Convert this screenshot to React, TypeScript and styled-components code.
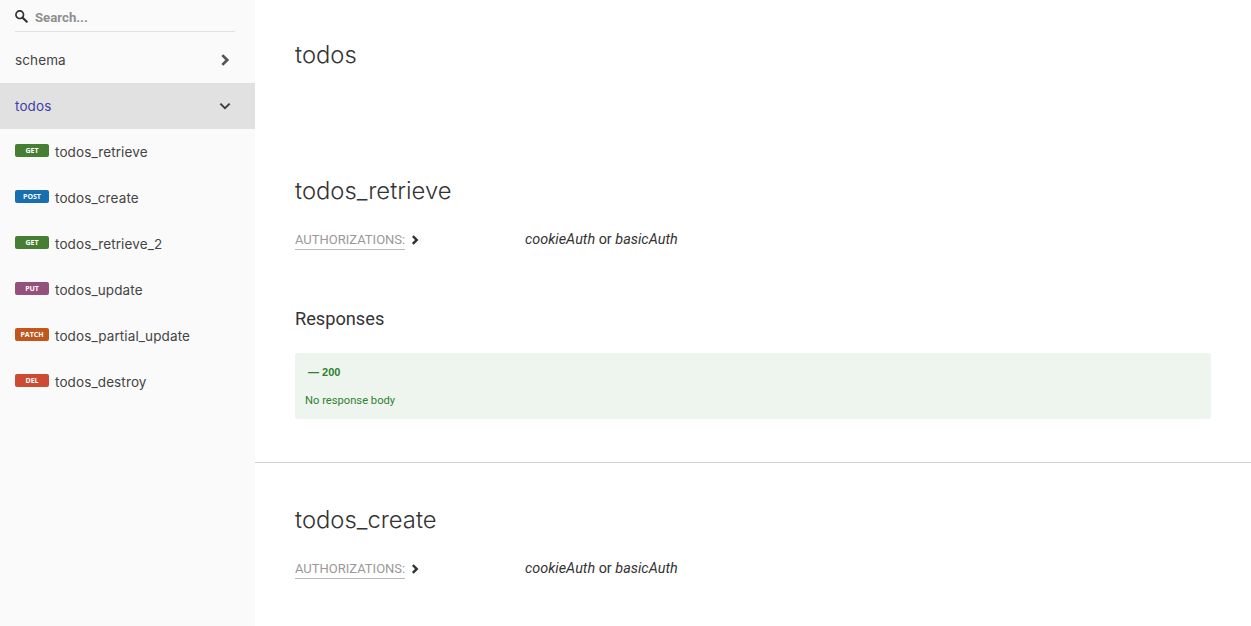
import React from "react";
import styled, { createGlobalStyle } from "styled-components";

const Global = createGlobalStyle`
  html, body { margin: 0; padding: 0; height: 100%; overflow: hidden; background: #fff; }
  body { font-family: "Roboto", sans-serif; color: #333; }
  #root { height: 100%; }
`;

const Page = styled.div`
  display: flex;
  height: 626px;
  overflow: hidden;
`;

const Sidebar = styled.aside`
  width: 255px;
  flex: none;
  background: #fafafa;
`;

const SearchBox = styled.div`
  display: flex;
  align-items: center;
  gap: 7px;
  height: 31px;
  margin: 0 20px 5px 15px;
  border-bottom: 1px solid #e1e1e1;
  box-sizing: content-box;
`;

const SearchIconWrap = styled.svg`
  flex: none;
  position: relative;
  top: 1px;
  fill: #333;
`;

const SearchLabel = styled.span`
  font: 700 13.2px "Roboto", sans-serif;
  color: #8f8f8f;
  position: relative;
  top: 2px;
`;

const MenuRow = styled.div<{ $active?: boolean }>`
  display: flex;
  align-items: center;
  height: 46px;
  padding: 0 21px 0 15px;
  background: ${(p) => (p.$active ? "#e1e1e1" : "transparent")};
`;

const MenuLabel = styled.span<{ $active?: boolean }>`
  flex: 1;
  font: 400 13.5px "Inter", sans-serif;
  letter-spacing: 0.12px;
  color: ${(p) => (p.$active ? "#3e3ea8" : "#444")};
`;

const Badge = styled.span<{ $color: string }>`
  display: flex;
  align-items: center;
  justify-content: center;
  width: 34px;
  height: 13px;
  margin: -4px 6px 0 0;
  border-radius: 2px;
  background: ${(p) => p.$color};
  color: #fff;
  font: 700 7px "Open Sans", sans-serif;
`;

const Main = styled.main`
  flex: 1;
  min-width: 0;
`;

const TagSection = styled.section`
  padding: 40px 40px 0;
  height: 94px;
`;

const PageTitle = styled.h1`
  margin: 0;
  font: 300 23.8px/30px "Inter", sans-serif;
  color: #333;
`;

const Operation = styled.section<{ $divided?: boolean }>`
  padding: 42px 40px 43px;
  border-bottom: ${(p) => (p.$divided ? "1px solid #d0d0d0" : "none")};
`;

const OpTitle = styled.h2`
  margin: 0 0 23px;
  font: 300 23.8px/30px "Inter", sans-serif;
  color: #333;
`;

const AuthRow = styled.div`
  display: flex;
  align-items: flex-start;
`;

const AuthToggle = styled.div`
  display: flex;
  align-items: center;
  width: 230px;
  flex: none;
`;

const AuthLabel = styled.span`
  font: 400 13px/18px "Roboto", sans-serif;
  padding-top: 2px;
  color: #999;
  border-bottom: 1px solid #bbb;
  width: 110px;
  margin-right: 3px;
  white-space: nowrap;
`;

const AuthSchemes = styled.div`
  font: 400 14.4px/21px "Roboto", sans-serif;
  color: #333;
  em { font-style: italic; }
`;

const ResponsesTitle = styled.h3`
  margin: 57px 0 22px;
  font: 400 18.2px/24px "Roboto", sans-serif;
  color: #333;
`;

const ResponseBox = styled.div`
  height: 66px;
  box-sizing: border-box;
  padding: 11px 10px;
  background: #eef5ee;
  border-radius: 2px;
  color: #2f8132;
`;

const ResponseCode = styled.div`
  font: 700 11px/16px "Liberation Sans", sans-serif;
  padding-left: 3px;
  margin-bottom: 13px;
`;

const ResponseText = styled.div`
  font: 400 11.2px/16px "Roboto", sans-serif;
`;

const ChevronSvg = styled.svg<{ $shift?: number }>`
  flex: none;
  margin-top: ${(p) => p.$shift ?? 0}px;
`;

const Chevron = ({ open, size = 18, color = "#333", weight = 0, shift = 0 }: { open?: boolean; size?: number; color?: string; weight?: number; shift?: number }) => (
  <ChevronSvg $shift={shift} width={size} height={size} viewBox="0 0 24 24" fill={color} stroke={color} strokeWidth={weight}>
    <polygon
      points="17.3 8.3 12 13.6 6.7 8.3 5.3 9.7 12 16.4 18.7 9.7"
      transform={open ? undefined : "rotate(-90 12 12)"}
    />
  </ChevronSvg>
);

const SearchIcon = () => (
  <SearchIconWrap width="13" height="13" viewBox="0 0 1000 1000">
    <path d="M968.2,849.4L667.3,549c83.9-136.5,66.7-317.4-51.7-435.6C477.1-25,252.5-25,113.9,113.4c-138.5,138.3-138.5,362.6,0,501C219.2,730.1,413.2,743,547.6,666.5l301.9,301.4c43.6,43.6,76.9,14.9,104.2-12.4C981,928.3,1011.8,893,968.2,849.4z M524.5,522c-88.9,88.7-233,88.7-321.8,0c-88.9-88.7-88.9-232.6,0-321.3c88.9-88.7,233-88.7,321.8,0C613.4,289.4,613.4,433.3,524.5,522z" />
  </SearchIconWrap>
);

const items = [
  { m: "GET", c: "#467f33", t: "todos_retrieve" },
  { m: "POST", c: "#186faf", t: "todos_create" },
  { m: "GET", c: "#467f33", t: "todos_retrieve_2" },
  { m: "PUT", c: "#95507c", t: "todos_update" },
  { m: "PATCH", c: "#bf581d", t: "todos_partial_update" },
  { m: "DEL", c: "#cc4b33", t: "todos_destroy" },
];

const Auth = () => (
  <AuthRow>
    <AuthToggle>
      <AuthLabel>AUTHORIZATIONS:</AuthLabel>
      <Chevron size={14} weight={2.2} shift={1} />
    </AuthToggle>
    <AuthSchemes>
      <em>cookieAuth</em> or <em>basicAuth</em>
    </AuthSchemes>
  </AuthRow>
);

export default function App() {
  return (
    <Page>
      <Global />
      <Sidebar>
        <SearchBox>
          <SearchIcon />
          <SearchLabel>Search...</SearchLabel>
        </SearchBox>
        <MenuRow>
          <MenuLabel>schema</MenuLabel>
          <Chevron color="#555" weight={1.6} />
        </MenuRow>
        <MenuRow $active>
          <MenuLabel $active>todos</MenuLabel>
          <Chevron open weight={0.6} />
        </MenuRow>
        {items.map((i) => (
          <MenuRow key={i.t}>
            <Badge $color={i.c}>{i.m}</Badge>
            <MenuLabel>{i.t}</MenuLabel>
          </MenuRow>
        ))}
      </Sidebar>
      <Main>
        <TagSection>
          <PageTitle>todos</PageTitle>
        </TagSection>
        <Operation $divided>
          <OpTitle>todos_retrieve</OpTitle>
          <Auth />
          <ResponsesTitle>Responses</ResponsesTitle>
          <ResponseBox>
            <ResponseCode>— 200</ResponseCode>
            <ResponseText>No response body</ResponseText>
          </ResponseBox>
        </Operation>
        <Operation>
          <OpTitle>todos_create</OpTitle>
          <Auth />
        </Operation>
      </Main>
    </Page>
  );
}
